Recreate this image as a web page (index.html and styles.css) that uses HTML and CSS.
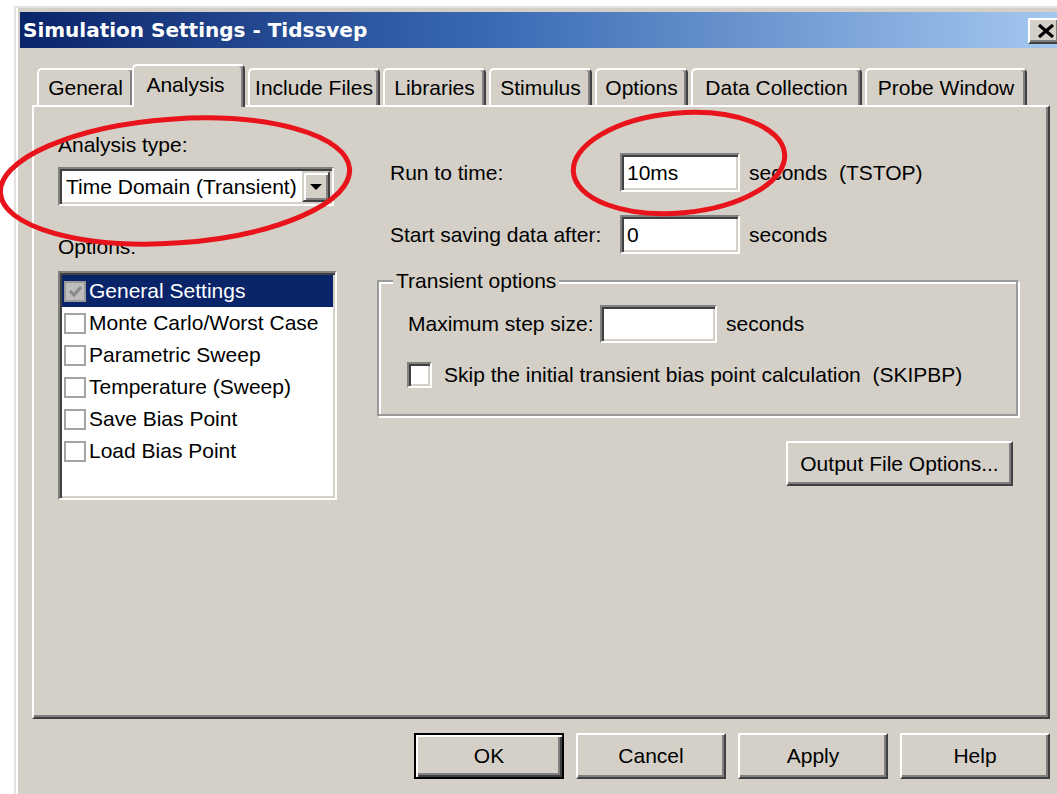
FILE: index.html
```html
<!DOCTYPE html>
<html lang="en">
<head>
<meta charset="utf-8">
<title>Simulation Settings - Tidssvep</title>
<link rel="stylesheet" href="styles.css">
</head>
<body>
<div class="window">
  <div class="titlebar">
    <span class="title">Simulation Settings - Tidssvep</span>
    <span class="close-btn">
      <svg width="18" height="14" viewBox="0 0 18 14"><path d="M2 1 L16 13 M16 1 L2 13" stroke="#000" stroke-width="3.2" fill="none"/></svg>
    </span>
  </div>

  <div class="content">
    <div class="tabs">
      <div class="tab t-general">General</div>
      <div class="tab tab-active t-analysis">Analysis</div>
      <div class="tab t-include">Include Files</div>
      <div class="tab t-libraries">Libraries</div>
      <div class="tab t-stimulus">Stimulus</div>
      <div class="tab t-options">Options</div>
      <div class="tab t-data">Data Collection</div>
      <div class="tab t-probe">Probe Window</div>
    </div>

    <div class="panel">
      <div class="col-left">
        <div class="label">Analysis type:</div>
        <div class="combo">
          <span class="combo-text">Time Domain (Transient)</span>
          <span class="combo-btn"><span class="arrow-down"></span></span>
        </div>
        <div class="label label-options">Options:</div>
        <div class="listbox">
          <div class="list-row selected"><span class="lcheck lcheck-on"><svg width="17" height="17" viewBox="0 0 17 17"><path d="M3 8 L7 12 L14 4" stroke="#8a8a8a" stroke-width="3" fill="none"/></svg></span><span>General Settings</span></div>
          <div class="list-row"><span class="lcheck"></span><span>Monte Carlo/Worst Case</span></div>
          <div class="list-row"><span class="lcheck"></span><span>Parametric Sweep</span></div>
          <div class="list-row"><span class="lcheck"></span><span>Temperature (Sweep)</span></div>
          <div class="list-row"><span class="lcheck"></span><span>Save Bias Point</span></div>
          <div class="list-row"><span class="lcheck"></span><span>Load Bias Point</span></div>
        </div>
      </div>

      <div class="col-right">
        <div class="field-row">
          <span class="field-label">Run to time:</span>
          <span class="textbox">10ms</span>
          <span class="suffix">seconds&nbsp; (TSTOP)</span>
        </div>
        <div class="field-row row-second">
          <span class="field-label">Start saving data after:</span>
          <span class="textbox">0</span>
          <span class="suffix">seconds</span>
        </div>

        <fieldset class="group">
          <legend>Transient options</legend>
          <div class="group-row">
            <span class="group-label">Maximum step size:</span>
            <span class="textbox textbox-step"></span>
            <span class="suffix">seconds</span>
          </div>
          <div class="check-row">
            <span class="checkbox"></span>
            <span>Skip the initial transient bias point calculation&nbsp; (SKIPBP)</span>
          </div>
        </fieldset>

        <div class="btn btn-output">Output File Options...</div>
      </div>
    </div>

    <div class="actions">
      <div class="btn btn-action btn-default">OK</div>
      <div class="btn btn-action">Cancel</div>
      <div class="btn btn-action">Apply</div>
      <div class="btn btn-action">Help</div>
    </div>
  </div>
</div>

<svg class="marks" width="1057" height="794" viewBox="0 0 1057 794">
  <ellipse cx="175" cy="181" rx="175" ry="62" transform="rotate(-4 175 181)"/>
  <ellipse cx="679" cy="163" rx="106" ry="50" transform="rotate(-5 679 163)"/>
</svg>
</body>
</html>
```

FILE: styles.css
```css
* {
  box-sizing: border-box;
}

html,
body {
  margin: 0;
  padding: 0;
}

body {
  position: relative;
  width: 1057px;
  height: 794px;
  overflow: hidden;
  background: #fff;
  font-family: "Liberation Sans", Arial, sans-serif;
  font-size: 21px;
  line-height: 24px;
  color: #000;
}

/* dialog frame */
.window {
  margin: 6px 0 0 14px;
  width: 1056px;
  height: 800px;
  background: #d4d0c8;
  border-top: 2px solid #e4e2dc;
  border-left: 2px solid #e4e2dc;
  box-shadow: inset 2px 0 0 #fff;
  padding: 4px 0 0 4px;
}

.titlebar {
  height: 36px;
  display: flex;
  align-items: center;
  justify-content: space-between;
  padding: 0 10px 0 3px;
  background: linear-gradient(to right, #0a246a 0%, #3a6ab4 45%, #a6caf0 100%);
}

.title {
  font-family: "DejaVu Sans", Verdana, sans-serif;
  font-weight: bold;
  font-size: 20px;
  color: #fff;
}

.close-btn {
  width: 32px;
  height: 26px;
  margin-top: 1px;
  display: flex;
  align-items: center;
  justify-content: center;
  padding-left: 4px;
  background: #d4d0c8;
  border: 2px solid;
  border-color: #fff #404040 #404040 #fff;
  box-shadow: inset -2px -2px 0 #808080;
}

.content {
  padding: 16px 0 0 12px;
}

/* tab strip */
.tabs {
  position: relative;
  z-index: 2;
  display: flex;
  align-items: flex-end;
  height: 41px;
  padding-left: 5px;
}

.tab {
  height: 37px;
  margin-right: 3px;
  display: flex;
  align-items: center;
  justify-content: center;
  background: #d4d0c8;
  border: 2px solid;
  border-bottom: none;
  border-color: #fff #404040 #fff #fff;
  border-radius: 5px 5px 0 0;
  box-shadow: inset -2px 0 0 #808080;
  padding-top: 1px;
}

.tab-active {
  height: 43px;
  margin-bottom: -2px;
  margin-left: -5px;
  padding-bottom: 5px;
  padding-right: 6px;
}

.t-general { width: 97px; }
.t-analysis { width: 113px; }
.t-include { width: 132px; }
.t-libraries { width: 103px; }
.t-stimulus { width: 103px; }
.t-options { width: 93px; }
.t-data { width: 171px; }
.t-probe { width: 162px; }

/* page body */
.panel {
  width: 1018px;
  height: 614px;
  display: flex;
  border: 2px solid;
  border-color: #fff #404040 #404040 #fff;
  box-shadow: inset -2px -2px 0 #808080;
}

.col-left {
  width: 279px;
  margin-left: 24px;
  padding-top: 26px;
  display: flex;
  flex-direction: column;
}

.label-options {
  margin-top: 29px;
}

/* sunken controls */
.combo,
.textbox,
.listbox {
  background: #fff;
  border: 2px solid;
  border-color: #808080 #fff #fff #808080;
  box-shadow: inset 2px 2px 0 #404040, inset -2px -2px 0 #d4d0c8;
}

.combo {
  width: 276px;
  height: 39px;
  margin-top: 10px;
  display: flex;
  align-items: center;
  justify-content: space-between;
  padding: 2px 2px 2px 6px;
}

.combo-btn {
  width: 28px;
  height: 31px;
  display: flex;
  align-items: center;
  justify-content: center;
  background: #d4d0c8;
  border: 2px solid;
  border-color: #d4d0c8 #404040 #404040 #d4d0c8;
  box-shadow: inset 2px 2px 0 #fff, inset -2px -2px 0 #808080;
}

.arrow-down {
  width: 0;
  height: 0;
  border-left: 6px solid transparent;
  border-right: 6px solid transparent;
  border-top: 6px solid #000;
}

.listbox {
  width: 279px;
  height: 229px;
  margin-top: 12px;
  padding: 2px;
}

.list-row {
  height: 32px;
  display: flex;
  align-items: center;
  padding-left: 2px;
}

.list-row.selected {
  background: #0a246a;
  color: #fff;
}

.lcheck {
  width: 22px;
  height: 21px;
  margin-right: 3px;
  flex: none;
  display: flex;
  align-items: center;
  justify-content: center;
  background: #fff;
  border: 2px solid #a4a4a4;
}

.lcheck-on {
  background: #bdbdbd;
  border-color: #9a9a9a;
}

/* right-hand fields */
.col-right {
  width: 641px;
  margin-left: 40px;
  padding-top: 46px;
  display: flex;
  flex-direction: column;
}

.field-row {
  height: 39px;
  display: flex;
  align-items: center;
  padding-left: 13px;
}

.row-second {
  margin-top: 23px;
}

.field-label {
  width: 230px;
}

.textbox {
  width: 120px;
  height: 39px;
  display: flex;
  align-items: center;
  padding-left: 5px;
}

.suffix {
  margin-left: 9px;
}

.group {
  margin: 15px 0 0;
  padding: 0 0 26px 29px;
  min-width: 0;
  border: 2px solid #9a9a9a;
  box-shadow: inset 2px 2px 0 #fff, 2px 2px 0 #fff;
}

.group legend {
  margin-left: -15px;
  padding: 0 3px;
  background: #d4d0c8;
}

.group-row {
  height: 38px;
  margin-top: 12px;
  display: flex;
  align-items: center;
}

.group-label {
  width: 192px;
}

.textbox-step {
  width: 117px;
  height: 38px;
}

.check-row {
  height: 26px;
  margin-top: 19px;
  display: flex;
  align-items: center;
}

.checkbox {
  width: 25px;
  height: 26px;
  margin-left: -1px;
  margin-right: 12px;
  background: #fff;
  border: 2px solid;
  border-color: #808080 #fff #fff #808080;
  box-shadow: inset 2px 2px 0 #404040, inset -2px -2px 0 #d4d0c8;
}

/* raised buttons */
.btn {
  display: flex;
  align-items: center;
  justify-content: center;
  background: #d4d0c8;
  border: 2px solid;
  border-color: #fff #404040 #404040 #fff;
  box-shadow: inset -2px -2px 0 #808080;
}

.btn-output {
  align-self: flex-end;
  width: 227px;
  height: 45px;
  margin-top: 25px;
  margin-right: 5px;
}

.actions {
  width: 1018px;
  margin-top: 14px;
  display: flex;
  justify-content: flex-end;
  gap: 12px;
}

.btn-action {
  width: 150px;
  height: 46px;
}

.btn-default {
  border: 2px solid #000;
  box-shadow: inset 2px 2px 0 #fff, inset -2px -2px 0 #404040, inset -4px -4px 0 #808080;
}

/* red highlight rings drawn over the dialog */
.marks {
  position: absolute;
  left: 0;
  top: 0;
  pointer-events: none;
}

.marks ellipse {
  fill: none;
  stroke: #e8131b;
  stroke-width: 5;
}
```
